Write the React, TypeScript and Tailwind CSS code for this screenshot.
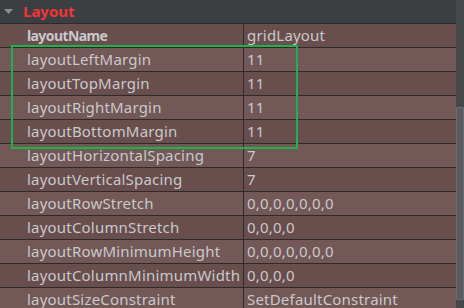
const ROWS: [string, string][] = [
  ["layoutName", "gridLayout"],
  ["layoutLeftMargin", "11"],
  ["layoutTopMargin", "11"],
  ["layoutRightMargin", "11"],
  ["layoutBottomMargin", "11"],
  ["layoutHorizontalSpacing", "7"],
  ["layoutVerticalSpacing", "7"],
  ["layoutRowStretch", "0,0,0,0,0,0,0"],
  ["layoutColumnStretch", "0,0,0,0"],
  ["layoutRowMinimumHeight", "0,0,0,0,0,0,0"],
  ["layoutColumnMinimumWidth", "0,0,0,0"],
  ["layoutSizeConstraint", "SetDefaultConstraint"],
];

export default function App() {
  return (
    <div className="relative flex h-[308px] w-[464px] overflow-hidden bg-[#3c3f41] font-['Noto_Sans','Liberation_Sans',sans-serif] text-[15px] tracking-[0.2px] text-[#c9c9c9]">
      <div className="flex w-[456px] flex-col">
        <div className="flex h-[24px] flex-none items-center border-b border-[#2b2b2b] bg-[#3c3f41]">
          <svg width="9" height="6" viewBox="0 0 9 6" className="ml-[4px] mr-[10px]">
            <path d="M0 0H9L4.5 5Z" fill="#8a8d90" />
          </svg>
          <span className="text-[15px] font-bold tracking-normal text-[#f5333a]">Layout</span>
        </div>
        {ROWS.map(([name, value], i) => (
          <div
            key={name}
            className={`flex h-[24px] flex-none items-center border-b border-[#2f2929] ${
              i % 2 === 0 ? "bg-[#694e4e]" : "bg-[#735858]"
            }`}
          >
            <div
              className={`w-[243px] flex-none overflow-hidden whitespace-nowrap pl-[27px] ${
                i === 0 ? "text-[14px] font-bold tracking-[-0.6px]" : ""
              }`}
            >
              {name}
            </div>
            <div className="h-full w-px flex-none bg-[#2f2929]" />
            <div className="whitespace-nowrap pl-[3px]">{value}</div>
          </div>
        ))}
      </div>
      <div className="flex w-[8px] flex-none flex-col bg-[#45494a] pt-[107px]">
        <div className="h-[193px] rounded-[1px] border border-[#6b6e70] bg-[#595c5e]" />
      </div>
      <div className="pointer-events-none absolute left-[11px] top-[45px] h-[104px] w-[287px] border-2 border-[#1fb14a]" />
    </div>
  );
}
